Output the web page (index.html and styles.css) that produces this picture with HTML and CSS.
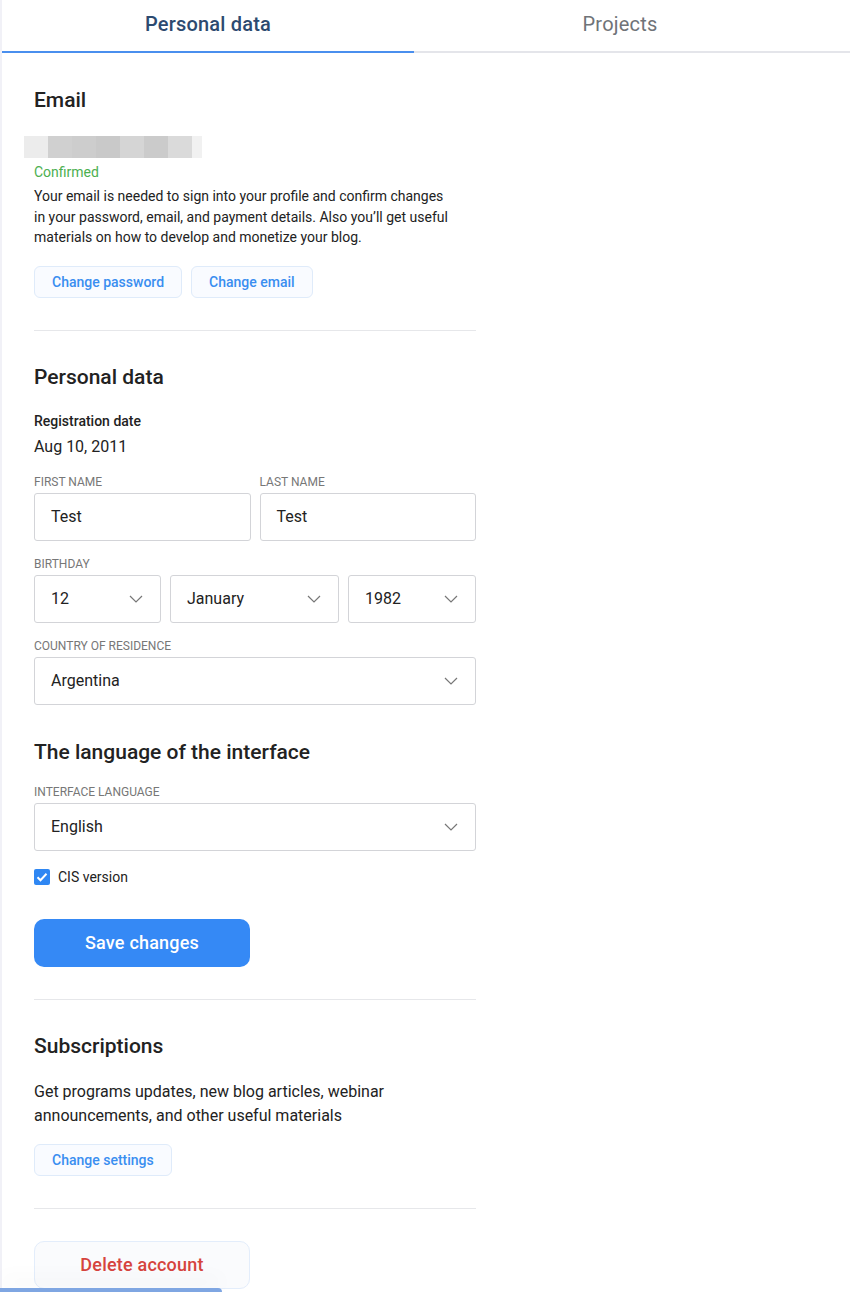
FILE: index.html
```html
<!DOCTYPE html>
<html lang="en">
<head>
    <title>Profile settings</title>
    <link rel="stylesheet" href="styles.css">
</head>
<body>
    <div class="page">
        <div class="tabs">
            <a class="tab active" href="#">Personal data</a>
            <a class="tab" href="#">Projects</a>
        </div>

        <div class="content">
            <section class="block first">
                <h2>Email</h2>
                <div class="email-blur">
                    <span class="px p1"></span><span class="px p2"></span><span class="px p3"></span><span class="px p4"></span><span class="px p5"></span><span class="px p6"></span><span class="px p7"></span><span class="px p8"></span>
                </div>
                <div class="confirmed">Confirmed</div>
                <p class="note">Your email is needed to sign into your profile and confirm changes in your password, email, and payment details. Also you’ll get useful materials on how to develop and monetize your blog.</p>
                <div class="btn-row">
                    <button class="btn-light">Change password</button>
                    <button class="btn-light">Change email</button>
                </div>
            </section>

            <section class="block">
                <h2>Personal data</h2>
                <div class="reg-label">Registration date</div>
                <div class="reg-date">Aug 10, 2011</div>

                <div class="row two">
                    <div class="field">
                        <label>First name</label>
                        <div class="box">Test</div>
                    </div>
                    <div class="field">
                        <label>Last name</label>
                        <div class="box">Test</div>
                    </div>
                </div>

                <div class="field">
                    <label>Birthday</label>
                    <div class="row three">
                        <div class="box select">12<svg class="chev" viewBox="0 0 14 8"><path d="M1 1l6 6 6-6"/></svg></div>
                        <div class="box select">January<svg class="chev" viewBox="0 0 14 8"><path d="M1 1l6 6 6-6"/></svg></div>
                        <div class="box select">1982<svg class="chev" viewBox="0 0 14 8"><path d="M1 1l6 6 6-6"/></svg></div>
                    </div>
                </div>

                <div class="field">
                    <label>Country of residence</label>
                    <div class="box select">Argentina<svg class="chev" viewBox="0 0 14 8"><path d="M1 1l6 6 6-6"/></svg></div>
                </div>

                <h2 class="sub">The language of the interface</h2>
                <div class="field lang">
                    <label>Interface language</label>
                    <div class="box select">English<svg class="chev" viewBox="0 0 14 8"><path d="M1 1l6 6 6-6"/></svg></div>
                </div>

                <div class="check">
                    <span class="checkbox"><svg viewBox="0 0 16 16"><path d="M3.5 8.2l3 3 6-6.4"/></svg></span>
                    CIS version
                </div>

                <button class="btn-primary">Save changes</button>
            </section>

            <section class="block">
                <h2>Subscriptions</h2>
                <p class="text">Get programs updates, new blog articles, webinar announcements, and other useful materials</p>
                <button class="btn-light">Change settings</button>
            </section>

            <section class="block last">
                <button class="btn-danger">Delete account</button>
            </section>
        </div>
    </div>

    <div class="bottom-bar"></div>
</body>
</html>
```

FILE: styles.css
```css
body {
    margin: 0;
    font-family: Roboto, "Liberation Sans", Arial, sans-serif;
    color: #222;
    background: #fff;
}

.page {
    border-left: 2px solid #f1f1f7;
    min-height: 1292px;
    box-sizing: border-box;
}

.tabs {
    display: flex;
    border-bottom: 2px solid #e4e5ea;
}

.tab {
    width: 412px;
    height: 51px;
    line-height: 48px;
    margin-bottom: -2px;
    text-align: center;
    font-size: 20px;
    font-weight: 400;
    color: #6f7378;
    text-decoration: none;
    border-bottom: 2px solid transparent;
    letter-spacing: 0.2px;
}

.tab.active {
    color: #2d4a70;
    font-weight: 500;
    border-bottom-color: #4a8fee;
}

.content {
    width: 442px;
    margin-left: 32px;
}

.block {
    padding: 32px 0 32px;
    border-bottom: 1px solid #e6e7ea;
}

.block.first {
    padding-top: 33px;
}

.block.last {
    border-bottom: none;
}

h2 {
    margin: 0;
    font-size: 21px;
    font-weight: 500;
    color: #222;
    line-height: 28px;
}

h2.sub {
    margin-top: 33px;
}

.email-blur {
    display: flex;
    margin: 22px 0 0 -10px;
    height: 22px;
}

.px {
    width: 24px;
    height: 22px;
}

.p1 { background: #ececec; }
.p2 { background: #d0d0d0; }
.p3 { background: #cdcdcd; }
.p4 { background: #c9c9c9; }
.p5 { background: #d5d5d5; }
.p6 { background: #cbcbcb; }
.p7 { background: #dadada; }
.p8 { background: #f1f1f1; width: 10px; }

.confirmed {
    margin-top: 6px;
    font-size: 14px;
    color: #4caf50;
    line-height: 16px;
}

.note {
    margin: 6px 0 0;
    font-size: 14px;
    line-height: 20.5px;
    color: #222;
    width: 420px;
}

.btn-row {
    display: flex;
    gap: 9px;
    margin-top: 18px;
}

.btn-light {
    font-family: Roboto, "Liberation Sans", Arial, sans-serif;
    height: 32px;
    padding: 0 17px;
    font-size: 14px;
    font-weight: 500;
    color: #3a8ef0;
    background: #f9fbff;
    border: 1px solid #dfebfa;
    border-radius: 6px;
    cursor: pointer;
}

.reg-label {
    margin-top: 22px;
    font-size: 14px;
    font-weight: 500;
    line-height: 16px;
}

.reg-date {
    margin-top: 8px;
    font-size: 16px;
    line-height: 20px;
}

.row {
    display: flex;
    gap: 9px;
}

.row.two {
    margin-top: 18px;
}

.row .field {
    flex: 1;
    margin-top: 0;
}

.row.three .box:nth-child(1) { width: 127px; flex: none; }
.row.three .box:nth-child(2) { width: 169px; flex: none; }
.row.three .box:nth-child(3) { flex: 1; }

.field {
    margin-top: 16px;
}

.field.lang {
    margin-top: 19px;
}

label {
    display: block;
    font-size: 12px;
    line-height: 14px;
    color: #777;
    text-transform: uppercase;
    margin-bottom: 4px;
}

.box {
    box-sizing: border-box;
    height: 48px;
    border: 1px solid #d3d4d8;
    border-radius: 3px;
    padding: 0 16px;
    display: flex;
    align-items: center;
    font-size: 16px;
    color: #222;
}

.select {
    justify-content: space-between;
}

.chev {
    width: 14px;
    height: 8px;
    fill: none;
    stroke: #777;
    stroke-width: 1.2;
    margin-right: 1px;
}

.check {
    display: flex;
    align-items: center;
    gap: 8px;
    margin-top: 18px;
    font-size: 14px;
    line-height: 16px;
}

.checkbox {
    width: 16px;
    height: 16px;
    border-radius: 2px;
    background: #2f87f3;
    display: inline-flex;
}

.checkbox svg {
    width: 16px;
    height: 16px;
    fill: none;
    stroke: #fff;
    stroke-width: 2;
}

.btn-primary {
    display: block;
    margin-top: 34px;
    width: 216px;
    height: 48px;
    border: none;
    border-radius: 10px;
    background: #3589f5;
    color: #fff;
    font-family: Roboto, "Liberation Sans", Arial, sans-serif;
    font-size: 18px;
    font-weight: 500;
    letter-spacing: 0.2px;
    cursor: pointer;
}

.text {
    margin: 20px 0 16px;
    font-size: 16px;
    line-height: 24px;
    width: 380px;
}

.btn-danger {
    display: block;
    width: 216px;
    height: 48px;
    border: 1px solid #e3edfb;
    border-radius: 10px;
    background: #fafbfd;
    color: #d6443e;
    font-family: Roboto, "Liberation Sans", Arial, sans-serif;
    font-size: 18px;
    font-weight: 500;
    letter-spacing: 0.2px;
    cursor: pointer;
}

.bottom-bar {
    position: fixed;
    left: 0;
    bottom: 0;
    width: 222px;
    height: 4px;
    background: #7fa6e2;
    border-top-right-radius: 4px;
    box-shadow: 0 -8px 20px rgba(0, 0, 0, 0.08);
}
```
